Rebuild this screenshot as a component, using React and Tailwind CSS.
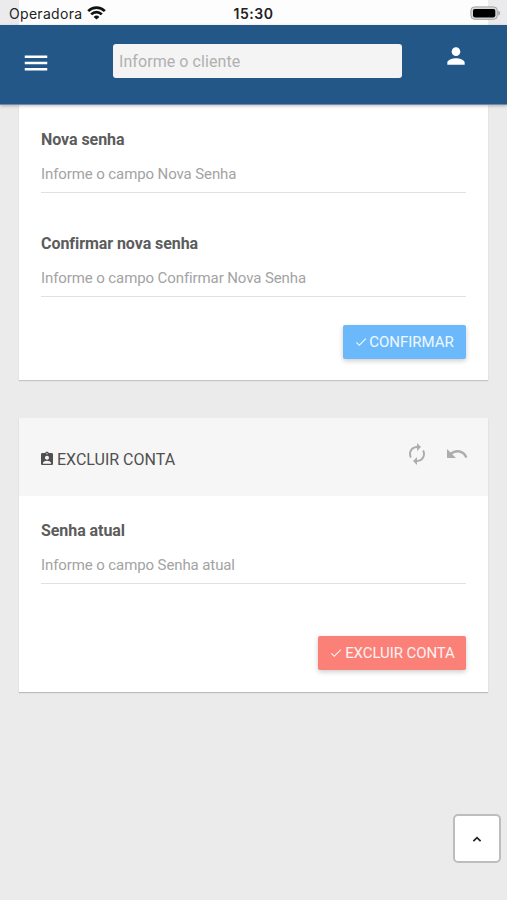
import {
  MdMenu,
  MdPerson,
  MdCheck,
  MdAssignmentInd,
  MdAutorenew,
  MdUndo,
} from 'react-icons/md';

function StatusBar() {
  return (
    <div className="h-[25px] px-[19px] bg-[#ebebee] shrink-0">
      <div className="h-full bg-[#fdfdfd] grid grid-cols-3 items-center">
        <div className="flex items-center -ml-[10px] mt-[3px] whitespace-nowrap text-[#222] font-['Inter'] text-[14px] leading-[20px] tracking-[0.3px]">
          Operadora
          <svg className="ml-[5px] mb-[3px] w-[19px] h-[14px] shrink-0" viewBox="0 0 19 14" fill="none" stroke="#111" strokeWidth="2.7">
            <path d="M1.2 5.1a11.8 11.8 0 0 1 16.6 0" />
            <path d="M4.2 8.4a7.5 7.5 0 0 1 10.6 0" />
            <path d="M9.5 13.6 6.6 10.9a4.1 4.1 0 0 1 5.8 0z" fill="#111" stroke="none" />
          </svg>
        </div>
        <div className="text-center mt-[2px] text-[#222] font-['Inter'] font-semibold text-[14px] leading-[20px] tracking-[0.5px]">15:30</div>
        <div className="flex justify-end -mr-[13px] mt-px">
          <svg className="w-[31px] h-[14px]" viewBox="0 0 31 14">
            <rect x="0.9" y="0.9" width="26.4" height="12.4" rx="3.6" fill="#d8d8d8" stroke="#a3a3a3" strokeWidth="1" />
            <rect x="3" y="3" width="22.3" height="8.4" rx="1.8" fill="#000" />
            <path d="M28.4 4.7c2 .6 2 4.2 0 4.8z" fill="#999" />
          </svg>
        </div>
      </div>
    </div>
  );
}

function Header() {
  return (
    <header className="h-[80px] shrink-0 flex items-start bg-[#235787] border-b border-[#6e8ba8] shadow-[0_1px_3px_rgba(0,0,0,0.25)] z-10">
      <button className="ml-[21px] mt-[23px] text-white">
        <MdMenu className="w-[30px] h-[30px]" />
      </button>
      <input
        className="ml-[62px] mt-[19px] w-[289px] h-[34px] px-[6px] rounded-[3px] bg-[#f4f4f4] text-[16px] tracking-[0.07px] placeholder:text-[#b0b0b0] placeholder:opacity-100"
        placeholder="Informe o cliente"
      />
      <button className="ml-[41px] mt-[18px] text-white">
        <MdPerson className="w-[26px] h-[26px]" />
      </button>
    </header>
  );
}

function Field({ label, placeholder }) {
  return (
    <div className="flex flex-col">
      <label className="font-bold text-[16px] leading-[20px] tracking-[-0.06px] text-[#5c5c5c]">{label}</label>
      <input
        className="mt-[8px] h-[35px] pb-[2px] border-b border-[#e0e0e0] text-[15px] tracking-[-0.1px] placeholder:text-[#a3a3a3] placeholder:opacity-100"
        placeholder={placeholder}
      />
    </div>
  );
}

export default function App() {
  return (
    <div className="relative w-[507px] h-[900px] overflow-hidden flex flex-col bg-[#ebebeb] font-['Roboto',sans-serif]">
      <StatusBar />
      <Header />

      {/* Nova senha */}
      <section className="mx-[19px] h-[275px] shrink-0 pt-[25px] px-[22px] bg-white shadow-[0_1px_1px_rgba(0,0,0,0.16)]">
        <Field label="Nova senha" placeholder="Informe o campo Nova Senha" />
        <div className="h-[41px]" />
        <Field label="Confirmar nova senha" placeholder="Informe o campo Confirmar Nova Senha" />
        <div className="mt-[28px] flex justify-end">
          <button className="w-[123px] h-[34px] flex items-center justify-center gap-px pr-px rounded-[2px] bg-[#6bb9fa] text-white/90 text-[15px] tracking-[-0.02px] shadow-[0_2px_5px_rgba(0,0,0,0.2)]">
            <MdCheck className="w-[14px] h-[14px]" />
            CONFIRMAR
          </button>
        </div>
      </section>

      {/* Excluir conta */}
      <section className="mx-[19px] mt-[38px] h-[274px] shrink-0 bg-white shadow-[0_1px_1px_rgba(0,0,0,0.2)]">
        <div className="h-[78px] pl-[20px] pr-[19px] flex items-center bg-[#f6f6f6]">
          <h2 className="mt-[5px] flex items-center gap-[2px] text-[16px] text-[#505050]">
            <MdAssignmentInd className="w-[16px] h-[16px] mb-[2px]" />
            EXCLUIR CONTA
          </h2>
          <div className="ml-auto mb-[7px] flex items-center gap-[16px] text-[#adadad]">
            <MdAutorenew className="w-[24px] h-[24px]" />
            <MdUndo className="w-[24px] h-[24px]" />
          </div>
        </div>
        <div className="pt-[25px] px-[22px]">
          <Field label="Senha atual" placeholder="Informe o campo Senha atual" />
          <div className="mt-[52px] flex justify-end">
            <button className="w-[148px] h-[34px] flex items-center justify-center gap-[2px] rounded-[2px] bg-[#fa8078] text-white/90 text-[15px] tracking-[-0.08px] shadow-[0_2px_5px_rgba(0,0,0,0.2)]">
              <MdCheck className="w-[14px] h-[14px]" />
              EXCLUIR CONTA
            </button>
          </div>
        </div>
      </section>

      {/* Back to top */}
      <button className="absolute left-[453px] top-[814px] w-[48px] h-[49px] flex items-center justify-center rounded-[5px] border-2 border-[#bdbdbd] bg-white text-[#222]">
        <svg className="w-[10px] h-[6px]" viewBox="0 0 10 6" fill="none" stroke="currentColor" strokeWidth="1.7">
          <path d="M1.4 5.1 5 1.6l3.6 3.5" />
        </svg>
      </button>
    </div>
  );
}
